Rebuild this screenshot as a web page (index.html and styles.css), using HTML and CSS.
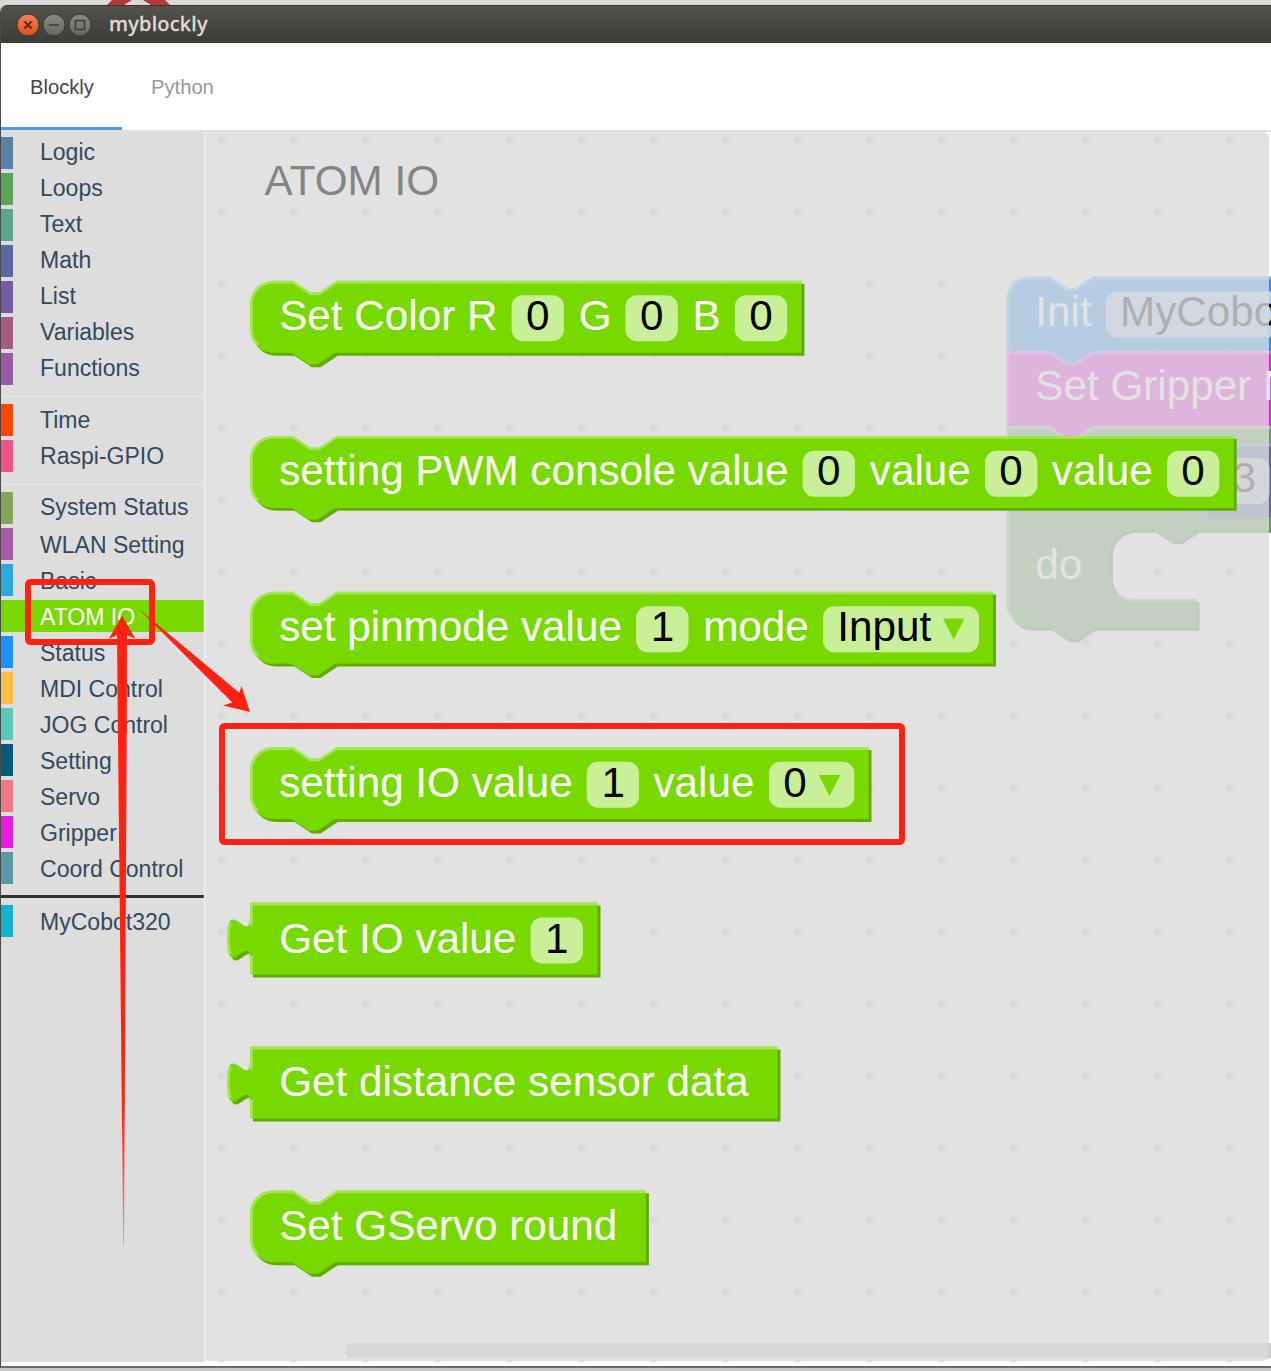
FILE: index.html
```html
<!DOCTYPE html>
<html lang="en">
<head>
<meta charset="utf-8">
<title>myblockly</title>
<link rel="stylesheet" href="styles.css">
</head>
<body>
<svg class="desktop-icon" width="70" height="5" viewBox="0 0 70 5"><path d="M0 5L5 0H25L17 5ZM44 5L36 0H58L63 5Z" fill="#b3393a"/></svg>
<div class="window">
  <header class="titlebar">
    <svg class="controls" width="78" height="26" viewBox="0 0 78 26">
      <defs>
        <linearGradient id="orange" x2="0" y2="1"><stop stop-color="#f58058"/><stop offset="1" stop-color="#df4f1c"/></linearGradient>
        <linearGradient id="grey" x2="0" y2="1"><stop stop-color="#8b8a83"/><stop offset="1" stop-color="#65645e"/></linearGradient>
      </defs>
      <circle cx="13" cy="13" r="11" fill="url(#orange)" stroke="#373631"/>
      <circle cx="39" cy="13" r="11" fill="url(#grey)" stroke="#373631"/>
      <circle cx="65" cy="13" r="11" fill="url(#grey)" stroke="#373631"/>
      <path d="M9.500 9.500l7 7m0-7l-7 7" stroke="#552b1a" stroke-width="1.800"/>
      <path d="M34 13h10M60.500 8.500h9v9h-9z" fill="none" stroke="#3c3b37" stroke-width="1.500"/>
    </svg>
    <span class="title">myblockly</span>
  </header>
  <nav class="tabs"><span class="tab active">Blockly</span><span class="tab">Python</span></nav>
  <main class="editor">
    <ul class="toolbox">
      <li class="high c-logic">Logic</li>
      <li class="high c-loops">Loops</li>
      <li class="high c-text">Text</li>
      <li class="high c-math">Math</li>
      <li class="high c-list">List</li>
      <li class="high c-vars">Variables</li>
      <li class="high c-func">Functions</li>
      <li class="sep"></li>
      <li class="c-time">Time</li>
      <li class="c-gpio">Raspi-GPIO</li>
      <li class="sep wide"></li>
      <li class="high c-system">System Status</li>
      <li class="low c-wlan">WLAN Setting</li>
      <li class="low c-basic">Basic</li>
      <li class="low c-atom">ATOM IO</li>
      <li class="low c-status">Status</li>
      <li class="low c-mdi">MDI Control</li>
      <li class="low c-jog">JOG Control</li>
      <li class="low c-setting">Setting</li>
      <li class="low c-servo">Servo</li>
      <li class="low c-gripper">Gripper</li>
      <li class="low c-coord">Coord Control</li>
      <li class="sep dark"></li>
      <li class="low c-cobot">MyCobot320</li>
    </ul>
    <svg class="workspace" width="1066" height="1230" viewBox="205 132 1066 1230">
      <defs>
        <pattern id="grid" x="185.500" y="103.500" width="72" height="72" patternUnits="userSpaceOnUse"><path d="M31.500 36h9M36 31.500v9" stroke="#ccc" stroke-width="2.800"/></pattern>
      </defs>
      <rect x="205" y="132" width="1066" height="1230" fill="#fff"/>
      <rect x="205" y="132" width="1066" height="1230" fill="url(#grid)"/>

      <g transform="translate(1006.500 276.500) scale(2.88)">
        <path fill="#1e90ff" d="M0 8A8 8 0 0 1 8 0H15l6 4 3 0 6-4H100V26H0z"/>
        <path class="edge" d="M.5 25V8A7.500 7.500 0 0 1 8 .5H15l6 4 3 0 6-4H100"/>
        <path fill="#e91be3" d="M0 26H15l6 4 3 0 6-4H100V52H0z"/>
        <path fill="#1e90ff" d="M15 25.800h15v.2l-6 4h-3l-6-4z"/>
        <path class="edge" d="M.5 51.500V26.500H15l6 4 3 0 6-4H100"/>
        <path fill="#499049" transform="translate(1 1)" d="M0 52H100V88H66l-6 4-3 0-6-4H44a8 8 0 0 0-8 8v8a8 8 0 0 0 8 8H66v10H30l-6 4-3 0-6-4H8a8 8 0 0 1-8-8z"/>
        <path fill="#5ba55b" d="M0 52H15l6 4 3 0 6-4H100V88H66l-6 4-3 0-6-4H44a8 8 0 0 0-8 8v8a8 8 0 0 0 8 8H66v10H30l-6 4-3 0-6-4H8a8 8 0 0 1-8-8z"/>
        <path fill="#e91be3" d="M15 51.800h15v.2l-6 4h-3l-6-4z"/>
        <path class="edge" d="M2.700 119.300A7.500 7.500 0 0 1 .5 114V52.500H15l6 4 3 0 6-4H100M39 110a7.500 7.500 0 0 0 5 2.500H66"/>
        <path fill="#5b67a5" d="M68.500 58H100V83.500H68.500z"/>
        <path class="edge" d="M69 83V58.500H100"/>
      </g>
      <rect class="field" x="1106" y="291.500" width="200" height="46" rx="11.500"/>
      <rect class="field" x="1220" y="458" width="49.500" height="46" rx="11.500"/>
      <g class="label">
        <text x="1035.300" y="325.500">Init</text><text class="value" x="1120" y="325.500">MyCobo</text>
        <text x="1035.300" y="400">Set Gripper M</text>
        <text class="value" x="1232.500" y="491.500">3</text>
        <text x="1035.300" y="578.500">do</text>
      </g>
      <rect x="345" y="1343" width="940" height="15" rx="6" fill="#ccc"/>

      <path fill="#dbdbdb" fill-opacity=".8" d="M205 132H1263a6 6 0 0 1 6 6V1355a6 6 0 0 1-6 6H205z"/>
      <path d="M204.500 132V1361" stroke="#eee" stroke-width="1.500"/>
      <text class="heading" x="264.600" y="194.500">ATOM IO</text>

      <g transform="translate(250 280.800) scale(2.88)">
        <path class="shade" transform="translate(1 1)" d="M0 8A8 8 0 0 1 8 0H15l6 4 3 0 6-4H191.500V25H29.500l-6 4-3 0-6-4H8a8 8 0 0 1-8-8z"/>
        <path class="block" d="M0 8A8 8 0 0 1 8 0H15l6 4 3 0 6-4H191.500V25H29.500l-6 4-3 0-6-4H8a8 8 0 0 1-8-8z"/>
        <path class="edge" d="M2.700 22.300A7.500 7.500 0 0 1 .5 17V8A7.500 7.500 0 0 1 8 .5H15l6 4 3 0 6-4H191.500"/>
      </g>
      <g transform="translate(250 435.900) scale(2.88)">
        <path class="shade" transform="translate(1 1)" d="M0 8A8 8 0 0 1 8 0H15l6 4 3 0 6-4H341.600V25H29.500l-6 4-3 0-6-4H8a8 8 0 0 1-8-8z"/>
        <path class="block" d="M0 8A8 8 0 0 1 8 0H15l6 4 3 0 6-4H341.600V25H29.500l-6 4-3 0-6-4H8a8 8 0 0 1-8-8z"/>
        <path class="edge" d="M2.700 22.300A7.500 7.500 0 0 1 .5 17V8A7.500 7.500 0 0 1 8 .5H15l6 4 3 0 6-4H341.600"/>
      </g>
      <g transform="translate(250 591.700) scale(2.88)">
        <path class="shade" transform="translate(1 1)" d="M0 8A8 8 0 0 1 8 0H15l6 4 3 0 6-4H258V25H29.500l-6 4-3 0-6-4H8a8 8 0 0 1-8-8z"/>
        <path class="block" d="M0 8A8 8 0 0 1 8 0H15l6 4 3 0 6-4H258V25H29.500l-6 4-3 0-6-4H8a8 8 0 0 1-8-8z"/>
        <path class="edge" d="M2.700 22.300A7.500 7.500 0 0 1 .5 17V8A7.500 7.500 0 0 1 8 .5H15l6 4 3 0 6-4H258"/>
      </g>
      <g transform="translate(250 747) scale(2.88)">
        <path class="shade" transform="translate(1 1)" d="M0 8A8 8 0 0 1 8 0H15l6 4 3 0 6-4H214.800V25H29.500l-6 4-3 0-6-4H8a8 8 0 0 1-8-8z"/>
        <path class="block" d="M0 8A8 8 0 0 1 8 0H15l6 4 3 0 6-4H214.800V25H29.500l-6 4-3 0-6-4H8a8 8 0 0 1-8-8z"/>
        <path class="edge" d="M2.700 22.300A7.500 7.500 0 0 1 .5 17V8A7.500 7.500 0 0 1 8 .5H15l6 4 3 0 6-4H214.800"/>
      </g>
      <g transform="translate(250 902.500) scale(2.88)">
        <path class="shade" transform="translate(1 1)" d="M0 0H120.700V25H0V20c0-10-8 8-8-7.500s8 2.500 8-7.500z"/>
        <path class="block" d="M0 0H120.700V25H0V20c0-10-8 8-8-7.500s8 2.500 8-7.500z"/>
        <path class="edge" d="M.5 25V18.500m-7.360-.5q-1.520-5.500 0-11m7.360 1V.5H120.700"/>
      </g>
      <g transform="translate(250 1046.500) scale(2.88)">
        <path class="shade" transform="translate(1 1)" d="M0 0H183.200V25H0V20c0-10-8 8-8-7.500s8 2.500 8-7.500z"/>
        <path class="block" d="M0 0H183.200V25H0V20c0-10-8 8-8-7.500s8 2.500 8-7.500z"/>
        <path class="edge" d="M.5 25V18.500m-7.360-.5q-1.520-5.500 0-11m7.360 1V.5H183.200"/>
      </g>
      <g transform="translate(250 1190.300) scale(2.88)">
        <path class="shade" transform="translate(1 1)" d="M0 8A8 8 0 0 1 8 0H15l6 4 3 0 6-4H137.500V25H29.500l-6 4-3 0-6-4H8a8 8 0 0 1-8-8z"/>
        <path class="block" d="M0 8A8 8 0 0 1 8 0H15l6 4 3 0 6-4H137.500V25H29.500l-6 4-3 0-6-4H8a8 8 0 0 1-8-8z"/>
        <path class="edge" d="M2.700 22.300A7.500 7.500 0 0 1 .5 17V8A7.500 7.500 0 0 1 8 .5H15l6 4 3 0 6-4H137.500"/>
      </g>

      <g class="field">
        <rect x="511.600" y="295.200" width="52.300" height="46" rx="11.500"/>
        <rect x="625.500" y="295.200" width="52.300" height="46" rx="11.500"/>
        <rect x="734.900" y="295.200" width="52.300" height="46" rx="11.500"/>
        <rect x="802.700" y="450.800" width="52.300" height="46" rx="11.500"/>
        <rect x="985" y="450.800" width="52.300" height="46" rx="11.500"/>
        <rect x="1167" y="450.800" width="52.300" height="46" rx="11.500"/>
        <rect x="636.200" y="606.300" width="52.300" height="46" rx="11.500"/>
        <rect x="823" y="606.300" width="156" height="46" rx="11.500"/>
        <rect x="586.700" y="761.700" width="52.300" height="46" rx="11.500"/>
        <rect x="769" y="761.700" width="85.300" height="46" rx="11.500"/>
        <rect x="530.600" y="917.400" width="52.300" height="46" rx="11.500"/>
      </g>
      <path class="block" d="M943 618.500h21.500l-10.700 21zM818.700 775h21.500l-10.700 21z"/>
      <g class="label">
        <text x="279.200" y="329.800">Set Color R</text><text class="value" x="526" y="329.800">0</text><text x="578.800" y="329.800">G</text><text class="value" x="640" y="329.800">0</text><text x="692.600" y="329.800">B</text><text class="value" x="749.300" y="329.800">0</text>
        <text x="279.200" y="485">setting PWM console value</text><text class="value" x="817" y="485">0</text><text x="869.800" y="485">value</text><text class="value" x="999.300" y="485">0</text><text x="1051.800" y="485">value</text><text class="value" x="1181.300" y="485">0</text>
        <text x="279.200" y="640.500">set pinmode value</text><text class="value" x="650.800" y="640.500">1</text><text x="703.200" y="640.500">mode</text><text class="value" x="837.300" y="640.500">Input</text>
        <text x="279.200" y="797">setting IO value</text><text class="value" x="601.400" y="797">1</text><text x="653.500" y="797">value</text><text class="value" x="783.300" y="797">0</text>
        <text x="279.200" y="952.500">Get IO value</text><text class="value" x="545" y="952.500">1</text>
        <text x="279.200" y="1096.300">Get distance sensor data</text>
        <text x="279.200" y="1240">Set GServo round</text>
      </g>
    </svg>
  </main>
</div>
<svg class="annotations" width="1271" height="1371" viewBox="0 0 1271 1371">
  <defs><linearGradient id="tail" gradientUnits="userSpaceOnUse" x1="0" y1="1100" x2="0" y2="1246"><stop stop-color="#ff2112"/><stop offset="1" stop-color="#ff2112" stop-opacity=".4"/></linearGradient></defs>
  <g fill="none" stroke="#ff2112" stroke-width="6">
    <rect x="28" y="582" width="124" height="60" rx="2.500"/>
    <rect x="222" y="726" width="680" height="116" rx="2.500"/>
  </g>
  <path fill="url(#tail)" d="M122 615.500L135.500 639 127 635 126.800 720 124 1246H123.300L117.800 720 117 635 108.800 639z"/>
  <path fill="#ff2112" d="M138.300 608.500L239.300 692.700 241.500 686 250 712 223 705.500 232.300 702.500z"/>
</svg>
</body>
</html>
```
FILE: styles.css
```css
* { box-sizing: border-box; }
body {
  margin: 0;
  height: 1371px;
  padding-top: 5px;
  overflow: hidden;
  position: relative;
  background: linear-gradient(#d9d9d9 50%, #c8c6c8 50%);
  font-family: "Liberation Sans", Arial, sans-serif;
}
.desktop-icon { position: absolute; left: 107px; top: 0; }
.window {
  display: flex;
  flex-direction: column;
  height: 1363px;
  background: #fff;
  border-left: 1px solid #4b4a48;
  border-bottom: 2px solid #6b696a;
  border-top-left-radius: 7px;
  overflow: hidden;
}
.titlebar {
  display: flex;
  align-items: center;
  flex: none;
  height: 38px;
  padding-left: 14px;
  background: linear-gradient(#53524c, #3c3b37);
  border-top: 1px solid #383733;
}
.controls { margin-top: 1px; }
.title {
  margin: -3px 0 0 16px;
  color: #dfdbd2;
  font: 500 20px "Noto Sans", "Open Sans", sans-serif;
  letter-spacing: .25px;
  -webkit-text-stroke: .3px #dfdbd2;
}
.tabs {
  display: flex;
  flex: none;
  height: 89px;
  border-bottom: 2px solid #e0e0e0;
  font-size: 20.2px;
}
.tab { height: 87px; padding: 0 29px; line-height: 89px; color: #97999f; }
.tab.active { width: 121px; border-bottom: 3px solid #4a9deb; color: #43464a; }
.editor { display: flex; }
.toolbox {
  width: 203px;
  height: 1230px;
  flex: none;
  margin: 0;
  padding: 5px 0 0;
  list-style: none;
  background: #ddd;
  font-size: 23.04px;
}
.toolbox li { height: 32px; margin-bottom: 4px; padding-left: 27px; line-height: 32px; border-left: 12px solid; }
.toolbox li::first-line { color: #34495e; }
.toolbox .high { line-height: 31px; }
.toolbox .low { line-height: 34px; }
.toolbox .sep { height: 1px; margin: 11px 0 7px; border: 0; background: #ebebeb; }
.toolbox .sep.wide { margin-top: 12px; }
.toolbox .sep.dark { height: 3px; margin: 11px 0 7px; background: #303030; }
.toolbox .c-logic { border-color: #5b80a5; }
.toolbox .c-loops { border-color: #5ba55b; }
.toolbox .c-text { border-color: #5ba58c; }
.toolbox .c-math { border-color: #5b67a5; }
.toolbox .c-list { border-color: #745ba5; }
.toolbox .c-vars { border-color: #a55b80; }
.toolbox .c-func { border-color: #995ba5; }
.toolbox .c-time { border-color: #ff4500; }
.toolbox .c-gpio { border-color: #f25287; }
.toolbox .c-system { border-color: #80a55b; }
.toolbox .c-wlan { border-color: #a55ba5; }
.toolbox .c-basic { border-color: #2fa8df; }
.toolbox .c-atom { border-color: #78d900; background: #78d900; }
.toolbox .c-atom::first-line { color: #fff; }
.toolbox .c-status { border-color: #1e90ff; }
.toolbox .c-mdi { border-color: #ffbc46; }
.toolbox .c-jog { border-color: #5bc8b7; }
.toolbox .c-setting { border-color: #005a78; }
.toolbox .c-servo { border-color: #f27a88; }
.toolbox .c-gripper { border-color: #e91be3; }
.toolbox .c-coord { border-color: #5b99a5; }
.toolbox .c-cobot { border-color: #12b3cc; }
.workspace { display: block; flex: none; margin-left: 1px; overflow: visible; }
.workspace text { font-size: 42.24px; white-space: pre; }
.heading { fill: #848484; }
.label { fill: #fff; }
.value { fill: #000; }
.block { fill: #78d900; }
.shade { fill: #60ad00; }
.edge { fill: none; stroke: #fff; stroke-opacity: .32; stroke-width: 1; }
.field { fill: #fff; fill-opacity: .6; }
.annotations { position: absolute; left: 0; top: 0; }
```
